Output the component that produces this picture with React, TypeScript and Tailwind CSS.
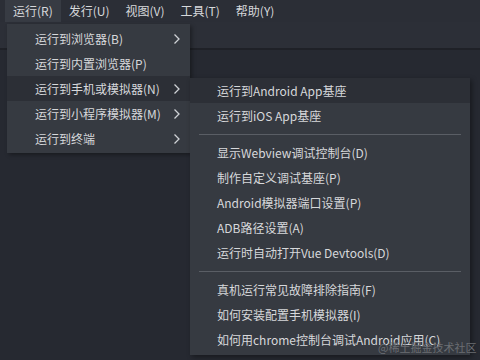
import React from "react";

const topMenus = ["运行(R)", "发行(U)", "视图(V)", "工具(T)", "帮助(Y)"];

const runItems = [
  { label: "运行到浏览器(B)", sub: true },
  { label: "运行到内置浏览器(P)", sub: false },
  { label: "运行到手机或模拟器(N)", sub: true, active: true },
  { label: "运行到小程序模拟器(M)", sub: true },
  { label: "运行到终端", sub: true },
];

type Entry = { label?: string; active?: boolean; sep?: boolean };

const phoneItems: Entry[] = [
  { label: "运行到Android App基座", active: true },
  { label: "运行到iOS App基座" },
  { sep: true },
  { label: "显示Webview调试控制台(D)" },
  { label: "制作自定义调试基座(P)" },
  { label: "Android模拟器端口设置(P)" },
  { label: "ADB路径设置(A)" },
  { label: "运行时自动打开Vue Devtools(D)" },
  { sep: true },
  { label: "真机运行常见故障排除指南(F)" },
  { label: "如何安装配置手机模拟器(I)" },
  { label: "如何用chrome控制台调试Android应用(C)" },
];

const Chevron = () => (
  <svg width="8" height="12" viewBox="0 0 8 12" fill="none">
    <path d="M1.5 1.5 L6 6 L1.5 10.5" stroke="#cfd2d6" strokeWidth="1.3" />
  </svg>
);

export default function App() {
  return (
    <main
      className="relative w-[480px] h-[360px] overflow-hidden bg-[#262931] text-[12px] text-[#d6d8db]"
      style={{ fontFamily: '"Noto Sans CJK SC", "Noto Sans", sans-serif' }}
    >
      <nav className="flex h-[22px] bg-[#2b2e36] items-center pl-[5px]">
        {topMenus.map((m, i) => (
          <div
            key={m}
            className={`h-full flex items-center px-[8px] ${i === 0 ? "bg-[#373b43]" : ""}`}
          >
            {m}
          </div>
        ))}
      </nav>
      <div className="h-[28px] bg-[#2c2f37] border-b-2 border-[#1f2127]" />

      <div className="absolute left-[7px] top-[24px] w-[183px] py-[2px] bg-[#363a41] shadow-[2px_2px_4px_rgba(0,0,0,0.35)]">
        {runItems.map((it) => (
          <div
            key={it.label}
            className={`h-[25px] flex items-center justify-between pl-[28px] pr-[9px] ${it.active ? "bg-[#2c2f36]" : ""}`}
          >
            <span>{it.label}</span>
            {it.sub && <Chevron />}
          </div>
        ))}
      </div>

      <div className="absolute left-[190px] top-[78px] w-[280px] pb-[3px] bg-[#363a41] shadow-[2px_2px_5px_rgba(0,0,0,0.4)]">
        {phoneItems.map((it, i) =>
          it.sep ? (
            <div key={i} className="h-[12px] flex items-center px-[9px]">
              <div className="h-px w-full bg-[#5a5e65]" />
            </div>
          ) : (
            <div
              key={i}
              className={`h-[25px] flex items-center pl-[27px] ${it.active ? "bg-[#2c2f36]" : ""}`}
            >
              {it.label}
            </div>
          )
        )}
      </div>
      <div className="absolute left-[378px] top-[341px] text-[11px] leading-[12px] text-[#6b6e73]">@稀土掘金技术社区</div>
    </main>
  );
}
